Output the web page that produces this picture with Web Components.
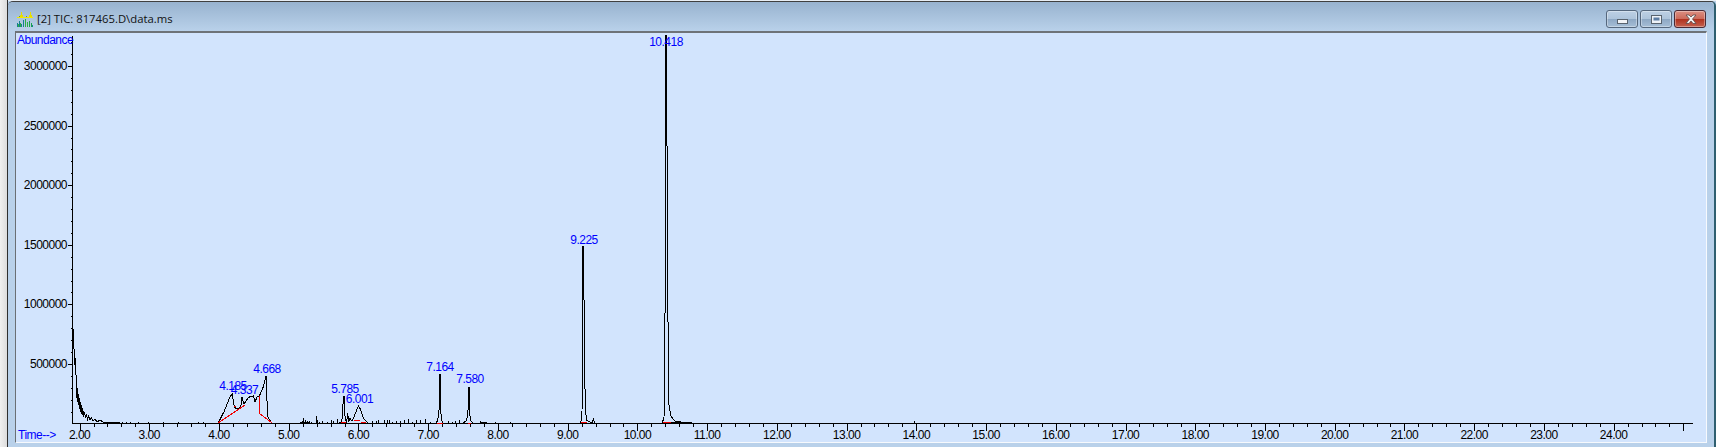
<!DOCTYPE html>
<html lang="en">
<head>
<meta charset="utf-8">
<title>TIC</title>
<style>
html,body{margin:0;padding:0;background:#b9d1ea;overflow:hidden}
</style>
</head>
<body>
<app-shell>
  <tic-window caption="[2] TIC: 817465.D\data.ms">
    <tic-icon slot="icon"></tic-icon>
    <win-button slot="controls" kind="min"></win-button>
    <win-button slot="controls" kind="max"></win-button>
    <win-button slot="controls" kind="close"></win-button>
    <tic-chart></tic-chart>
  </tic-window>
</app-shell>
<script>
class AppShell extends HTMLElement{
  constructor(){super();this.attachShadow({mode:'open'}).innerHTML=`<style>
  :host{display:flex;width:1716px;height:447px;background:#e6e6e6;overflow:hidden}
  .edge{width:7px;flex:none;background:linear-gradient(90deg,#f0f0f0,#dcdcdc);border-right:1px solid #2e2e2e;box-sizing:content-box}
  ::slotted(*){flex:1;min-width:0}
  </style><div class="edge"></div><slot></slot>`;}
}
class TicWindow extends HTMLElement{
  constructor(){super();this.attachShadow({mode:'open'}).innerHTML=`<style>
  :host{display:flex;flex-direction:column;background:#b9d1ea;border-top:1px solid #e8eef4;box-sizing:border-box;height:447px;font-family:"Open Sans","Noto Sans","Liberation Sans",sans-serif}
  .frame{display:flex;flex-direction:column;flex:1;min-height:0;border-top:1px solid #404040;border-right:2px solid #2f5f6f;border-top-left-radius:5px;border-top-right-radius:5px;background:#b9d1ea}
  .bar{display:flex;align-items:center;height:29px;flex:none;box-sizing:border-box;padding:0 7px 0 9px;gap:4px;background:linear-gradient(180deg,#98b3cf,#b9d1ea);border-top-left-radius:5px;border-top-right-radius:5px}
  .cap{flex:1;font-size:11.3px;color:#111;white-space:nowrap;line-height:16px;padding-top:5px;margin-left:-1px}
  .ctl{display:flex;gap:2px;align-items:center;margin-top:5px;margin-right:1px}
  .client{flex:1;min-height:0;margin:0 7px 4px 7px;border-left:1px solid #6a6f74;border-top:2px solid #6e7378;border-right:1px solid #f6f9fd;border-bottom:1px solid #f6f9fd;background:#d2e4fd}
  </style><div class="frame"><div class="bar"><slot name="icon"></slot><span class="cap"></span><div class="ctl"><slot name="controls"></slot></div></div><div class="client"><slot></slot></div></div>`;
  this.shadowRoot.querySelector('.cap').textContent=this.getAttribute('caption')||'';}
}
class TicIcon extends HTMLElement{
  constructor(){super();this.attachShadow({mode:'open'}).innerHTML=`<style>:host{display:block;width:17px;height:16px;flex:none;margin-top:6px}svg{display:block}</style>
  <svg width="17" height="16" viewBox="0 0 17 16" shape-rendering="crispEdges" fill="none">
   <path d="M0 5.500H16" stroke="#f2ea00"/>
   <path d="M4.500 5V0M3.500 3V5M5.500 3V5M13.500 5V0M12.500 3V5M14.500 3V5" stroke="#e8de00"/>
   <path d="M2 4.500H3M9 4.500H10" stroke="#7c9a2a"/>
   <path d="M0.500 15V11M2.500 15V9M4.500 15V12M6.500 15V8" stroke="#17808f"/>
   <path d="M1.500 15V12M3.500 15V11M8.500 15V7M10.500 15V10" stroke="#2bb043"/>
   <path d="M12.500 15V9M14.500 15V11" stroke="#18a44a"/>
   <path d="M15.500 15V13" stroke="#17808f"/>
  </svg>`;}
}
class WinButton extends HTMLElement{
  constructor(){super();
    const k=this.getAttribute('kind');
    const g={min:'<rect x="10.500" y="8.500" width="10" height="4" fill="#f2f4f7" stroke="#59636e"/>',
      max:'<rect x="10.500" y="4.500" width="10" height="8" fill="#eef2f7" stroke="#59636e"/><rect x="12.500" y="6.500" width="6" height="3" fill="#5d7da3"/>',
      close:'<path d="M11 4h3l2 2 2-2h3l-3.500 4 3.500 4.500h-3l-2-2.500-2 2.500h-3l3.500-4.500z" fill="#f2f2f2" stroke="#5a4a4a" stroke-width=".8"/>'}[k];
    this.attachShadow({mode:'open'}).innerHTML=`<style>
    :host{display:block;width:32px;height:18px;box-sizing:border-box;border:1px solid #55677d;border-radius:3px;flex:none;
      background:linear-gradient(180deg,#bdd0e4 0,#aec4db 48%,#8ea8c4 52%,#a6bed6 100%);box-shadow:inset 0 0 0 1px rgba(255,255,255,.35)}
    :host([kind=close]){border-color:#4a2a35;background:linear-gradient(180deg,#dc8f82 0,#cc6a5b 48%,#b0321f 52%,#c4614f 100%)}
    svg{display:block;position:relative}
    </style><svg width="30" height="16" viewBox="0 0 30 16">${g}</svg>`;}
}
class TicChart extends HTMLElement{
  constructor(){super();
    const X=t=>149.3+69.73*(t-3), Y=v=>423.6-v*59.6/500000, ox=16, oy=33;
    let ticks='', txt='';
    const T=(x,y,s,a,c)=>`<text x="${x-ox}" y="${y-oy}" text-anchor="${a||'middle'}" fill="${c||'#000'}">${s}</text>`;
    for(let i=0;i<=115;i++){const t=2+i*.2,x=Math.round(X(t))+.5,maj=i%5==0;
      ticks+=`M${x-ox} ${423-oy}V${(maj?431:427)-oy}`;
      if(maj&&t<24.5)txt+=T(X(t),439,t.toFixed(2));}
    for(let v=0;v<=3200000;v+=100000){const y=Math.round(Y(v))+.5,maj=v%500000==0;
      if(v==0)continue;
      ticks+=`M${(maj?68:71)-ox} ${y-oy}H${72-ox}`;
      if(maj)txt+=T(67,Math.round(Y(v))+4,v,'end');}
    const P=a=>a.map(p=>(p[0]-ox)+' '+(p[1]-oy)).join(' ');
    const z=(a,f)=>a.map(p=>[p[0]/3+f[0],p[1]/3+f[1]]);
    const decay=[[73.500,329],[73.500,345],[74.500,352],[74.500,365],[75.500,358],[75.500,372],[76.500,377],[76.500,398],[77.500,388],[77.500,402],[78.500,394],[78.500,405],[79.500,398],[79.500,409],[80.500,402],[80.500,412],[81.500,405],[81.500,414],[82.500,408],[82.500,415],[83.500,411],[83.500,417],[84.500,412],[85.500,418],[86.500,414],[87.500,419],[88.500,416],[90,420],[91.500,418],[93,421],[95,419],[97,422],[100,420],[104,422.500],[120,422.500]];
    const p4=z([[655,248],[672,215],[690,170],[697,163],[703,200],[708,207],[722,202],[726,172],[732,192],[745,172],[760,168],[765,185],[772,170],[778,168],[790,140],[798,108],[803,230],[815,248]],[0,340]);
    const p5=z([[110,160],[122,158],[126,148],[128,130],[130,78],[132,78],[134,130],[137,150],[140,158],[143,128],[146,155],[150,145],[154,152],[158,150],[162,140],[168,125],[175,108],[180,115],[185,130],[190,145],[195,150],[200,155],[205,159]],[300,370]);
    const p7=[[436,423],[437.500,421],[438.500,415],[439,410],[439,374],[440,374],[440,410],[441.300,415],[442,421],[443,423]];
    const p75=[[463,423],[466,421],[467.500,417],[468,410],[468,387],[469,387],[469,410],[470,416],[471,421],[473,423]];
    const p9=[[580,423],[581,421],[582,412],[582.500,350],[583,246],[583.700,246],[584,300],[584.800,380],[585.500,410],[586.500,420],[590,422],[592.500,422],[593.500,418],[594.500,423]];
    const p10=[[662,423],[664,418],[664.600,375],[665.500,240],[666,35],[666.700,35],[667,146],[667.400,190],[667.800,280],[668.200,360],[669,405],[671,416],[673,419],[675,421],[684,422.500],[690,422.500]];
    const spikes=[[108,1],[112,1],[116,1],[122,1],[126,1],[130,1],[138,1],[148,1],[163,1],[178,1],[198,1],[203,1],[303,5],[305,3],[307,2],[309,2],[316,7],[317,3],[322,2],[331,3],[333,2],[337,4],[302,2],[311,1],[319,1],[327,1],[365,1],[372,2],[376,2],[378,3],[384,3],[387,3],[389,3],[392,1],[396,2],[400,2],[404,3],[408,4],[412,1],[416,3],[420,3],[425,4],[430,1],[448,2],[452,1],[455,2],[459,3],[480,2],[486,1],[495,1],[510,1],[914,2]];
    const sp=spikes.map(s=>`M${s[0]+.5-ox} ${423-oy}V${423-s[1]-oy}`).join('');
    const base=[[300,310],[361,366],[480,486],[670,692]].map(b=>`M${b[0]-ox} ${422.500-oy}H${b[1]-ox}`).join('');
    const reds=[[218,423,245,405],[259,396,259,413],[259,413,272,423]];
    const red=reds.map(r=>`M${r[0]-ox} ${r[1]-oy}L${r[2]-ox} ${r[3]-oy}`).join('')
      +[[341,346,422.500],[354,360,420.500],[361,366,422],[437,443,423],[468,471,423],[581,587,422.500],[663,671,422.500],[234,236,406]].map(r=>`M${r[0]-ox} ${r[2]-oy}H${r[1]-ox}`).join('');
    const labels=[['4.185',233,390],['4.337',244.500,394],['4.668',267,373],['5.785',345,393],['6.001',359.500,403],['7.164',440,371],['7.580',470,383],['9.225',584,244],['10.418',666,46]];
    let lbl=labels.map(l=>T(l[1],l[2],l[0],'middle','#0000ff')).join('');
    lbl+=T(17,44,'Abundance','start','#0000ff')+T(18,439,'Time--&gt;','start','#0000ff');
    this.attachShadow({mode:'open'}).innerHTML=`<style>
    :host{display:block;width:100%;height:100%;overflow:hidden}
    svg{display:block;font:12px "Liberation Sans",Arial,sans-serif;letter-spacing:-.5px}
    .l{fill:none;stroke:#000;stroke-width:1}
    </style>
    <svg width="1690" height="409" viewBox="0 0 1690 409" shape-rendering="crispEdges">
      <path class="l" d="M${72.5-ox} ${36-oy}V${423.5-oy}M${72-ox} ${423.5-oy}H${1693-ox}${ticks}"/>
      ${[decay,p4,p5,p7,p75,p9,p10].map(a=>`<polyline class="l" points="${P(a)}"/>`).join('')}
      <path class="l" d="${sp}${base}"/>
      <path d="${red}" fill="none" stroke="#f00000" stroke-width="1"/>
      <g>${txt}</g><g>${lbl}</g>
    </svg>`;}
}
customElements.define('app-shell',AppShell);
customElements.define('tic-window',TicWindow);
customElements.define('tic-icon',TicIcon);
customElements.define('win-button',WinButton);
customElements.define('tic-chart',TicChart);
</script>
</body>
</html>
